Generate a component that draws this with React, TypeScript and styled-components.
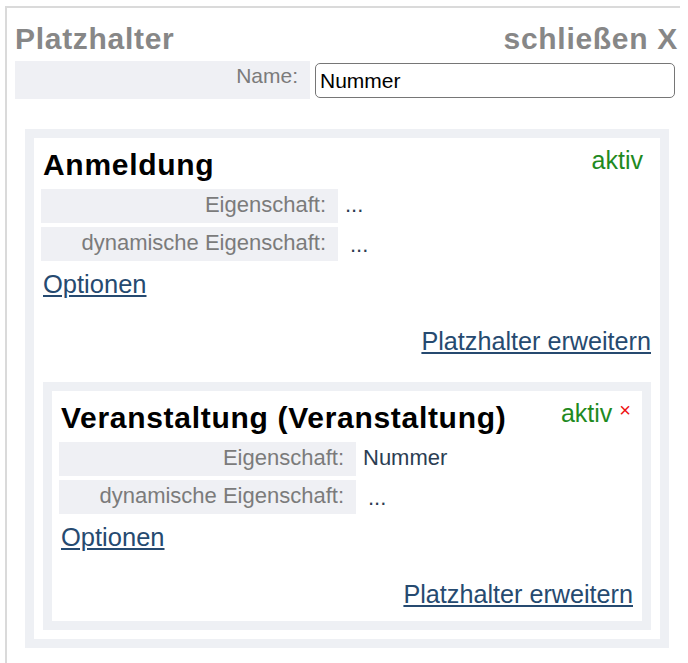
import React from 'react';
import styled, { createGlobalStyle } from 'styled-components';

const GlobalStyle = createGlobalStyle`
  html, body { margin: 0; padding: 0; background: #ffffff; }
  body { font-family: "Liberation Sans", Arial, sans-serif; }
`;

const Panel = styled.div`
  box-sizing: border-box;
  width: 675px;
  min-height: 657px;
  margin: 6px 0 0 5px;
  border-top: 2px solid #dadada;
  border-left: 2px solid #dadada;
  padding: 14px 2px 14px 8px;
`;

const Header = styled.div`
  display: flex;
  justify-content: space-between;
  align-items: baseline;
  font-size: 30px;
  line-height: 34px;
  font-weight: bold;
  letter-spacing: 0.7px;
  color: #878787;
`;

const NameRow = styled.div`
  display: flex;
  align-items: center;
  gap: 5px;
  height: 38px;
  margin-top: 5px;
`;

const NameLabel = styled.label`
  box-sizing: border-box;
  width: 295px;
  align-self: stretch;
  background: #eff0f4;
  text-align: right;
  padding: 3px 12px 0 0;
  font-size: 21px;
  line-height: 24px;
  color: #7b7b7b;
`;

const NameInput = styled.input`
  box-sizing: border-box;
  width: 360px;
  height: 35px;
  margin-top: 1px;
  border: 1px solid #767676;
  border-radius: 5px;
  padding: 0 4px;
  font-family: "Liberation Sans", Arial, sans-serif;
  font-size: 21px;
  color: #000;
  background: #fff;
  outline: none;
`;

const Box = styled.div<{ $nested?: boolean }>`
  box-sizing: border-box;
  border: 9px solid #eef0f4;
  padding: 10px 9px 9px 9px;
  margin: ${(p) => (p.$nested ? '26px 0 0 0' : '30px 0 0 10px')};
  width: ${(p) => (p.$nested ? 'auto' : '644px')};
`;

const TitleRow = styled.div`
  display: flex;
  justify-content: space-between;
  align-items: flex-start;
`;

const Title = styled.div`
  font-size: 30px;
  line-height: 34px;
  font-weight: bold;
  letter-spacing: 0.7px;
  color: #000;
`;

const Status = styled.div<{ $gapRight: number }>`
  display: flex;
  align-items: flex-start;
  margin-top: -2px;
  margin-right: ${(p) => p.$gapRight}px;
`;

const Active = styled.span`
  font-size: 25px;
  line-height: 29px;
  color: #1f8a1f;
`;

const Remove = styled.span`
  font-size: 20px;
  line-height: 16px;
  color: #ee1111;
  margin: 3px 0 0 7px;
  cursor: pointer;
`;

const Rows = styled.div`
  display: flex;
  flex-direction: column;
  gap: 4px;
  margin: 7px 0 0 -2px;
`;

const Row = styled.div`
  display: flex;
  height: 34px;
`;

const RowLabel = styled.div`
  box-sizing: border-box;
  width: 297px;
  background: #eff0f4;
  text-align: right;
  padding: 3px 12px 0 0;
  font-size: 22px;
  line-height: 25px;
  color: #7b7b7b;
`;

const RowValue = styled.div<{ $indent: number; $drop: number }>`
  padding-left: ${(p) => p.$indent}px;
  padding-top: ${(p) => 3 + p.$drop}px;
  font-size: 22px;
  line-height: 25px;
  color: #2b3d52;
`;

const OptionsLink = styled.a`
  display: block;
  width: fit-content;
  margin-top: 9px;
  font-size: 25.5px;
  line-height: 29px;
  color: #264a70;
  text-decoration: underline;
  cursor: pointer;
`;

const ExpandRow = styled.div`
  display: flex;
  justify-content: flex-end;
  margin: 28px 0 3px 0;
`;

const ExpandLink = styled.a`
  font-size: 25.2px;
  line-height: 29px;
  color: #264a70;
  text-decoration: underline;
  cursor: pointer;
`;

type Prop = { label: string; value: string; indent: number; drop: number };

type Placeholder = {
  title: string;
  removable: boolean;
  props: Prop[];
  child?: Placeholder;
};

const data: Placeholder = {
  title: 'Anmeldung',
  removable: false,
  props: [
    { label: 'Eigenschaft:', value: '...', indent: 7, drop: 0 },
    { label: 'dynamische Eigenschaft:', value: '...', indent: 12, drop: 2 },
  ],
  child: {
    title: 'Veranstaltung (Veranstaltung)',
    removable: true,
    props: [
      { label: 'Eigenschaft:', value: 'Nummer', indent: 7, drop: 0 },
      { label: 'dynamische Eigenschaft:', value: '...', indent: 12, drop: 2 },
    ],
  },
};

function PlaceholderBox({ item, nested }: { item: Placeholder; nested?: boolean }) {
  return (
    <Box $nested={nested}>
      <TitleRow>
        <Title>{item.title}</Title>
        <Status $gapRight={item.removable ? 2 : 8}>
          <Active>aktiv</Active>
          {item.removable && <Remove>×</Remove>}
        </Status>
      </TitleRow>
      <Rows>
        {item.props.map((p) => (
          <Row key={p.label}>
            <RowLabel>{p.label}</RowLabel>
            <RowValue $indent={p.indent} $drop={p.drop}>{p.value}</RowValue>
          </Row>
        ))}
      </Rows>
      <OptionsLink>Optionen</OptionsLink>
      <ExpandRow>
        <ExpandLink>Platzhalter erweitern</ExpandLink>
      </ExpandRow>
      {item.child && <PlaceholderBox item={item.child} nested />}
    </Box>
  );
}

export default function App() {
  return (
    <>
      <GlobalStyle />
      <Panel>
        <Header>
          <span>Platzhalter</span>
          <span>schließen X</span>
        </Header>
        <NameRow>
          <NameLabel>Name:</NameLabel>
          <NameInput defaultValue="Nummer" />
        </NameRow>
        <PlaceholderBox item={data} />
      </Panel>
    </>
  );
}
